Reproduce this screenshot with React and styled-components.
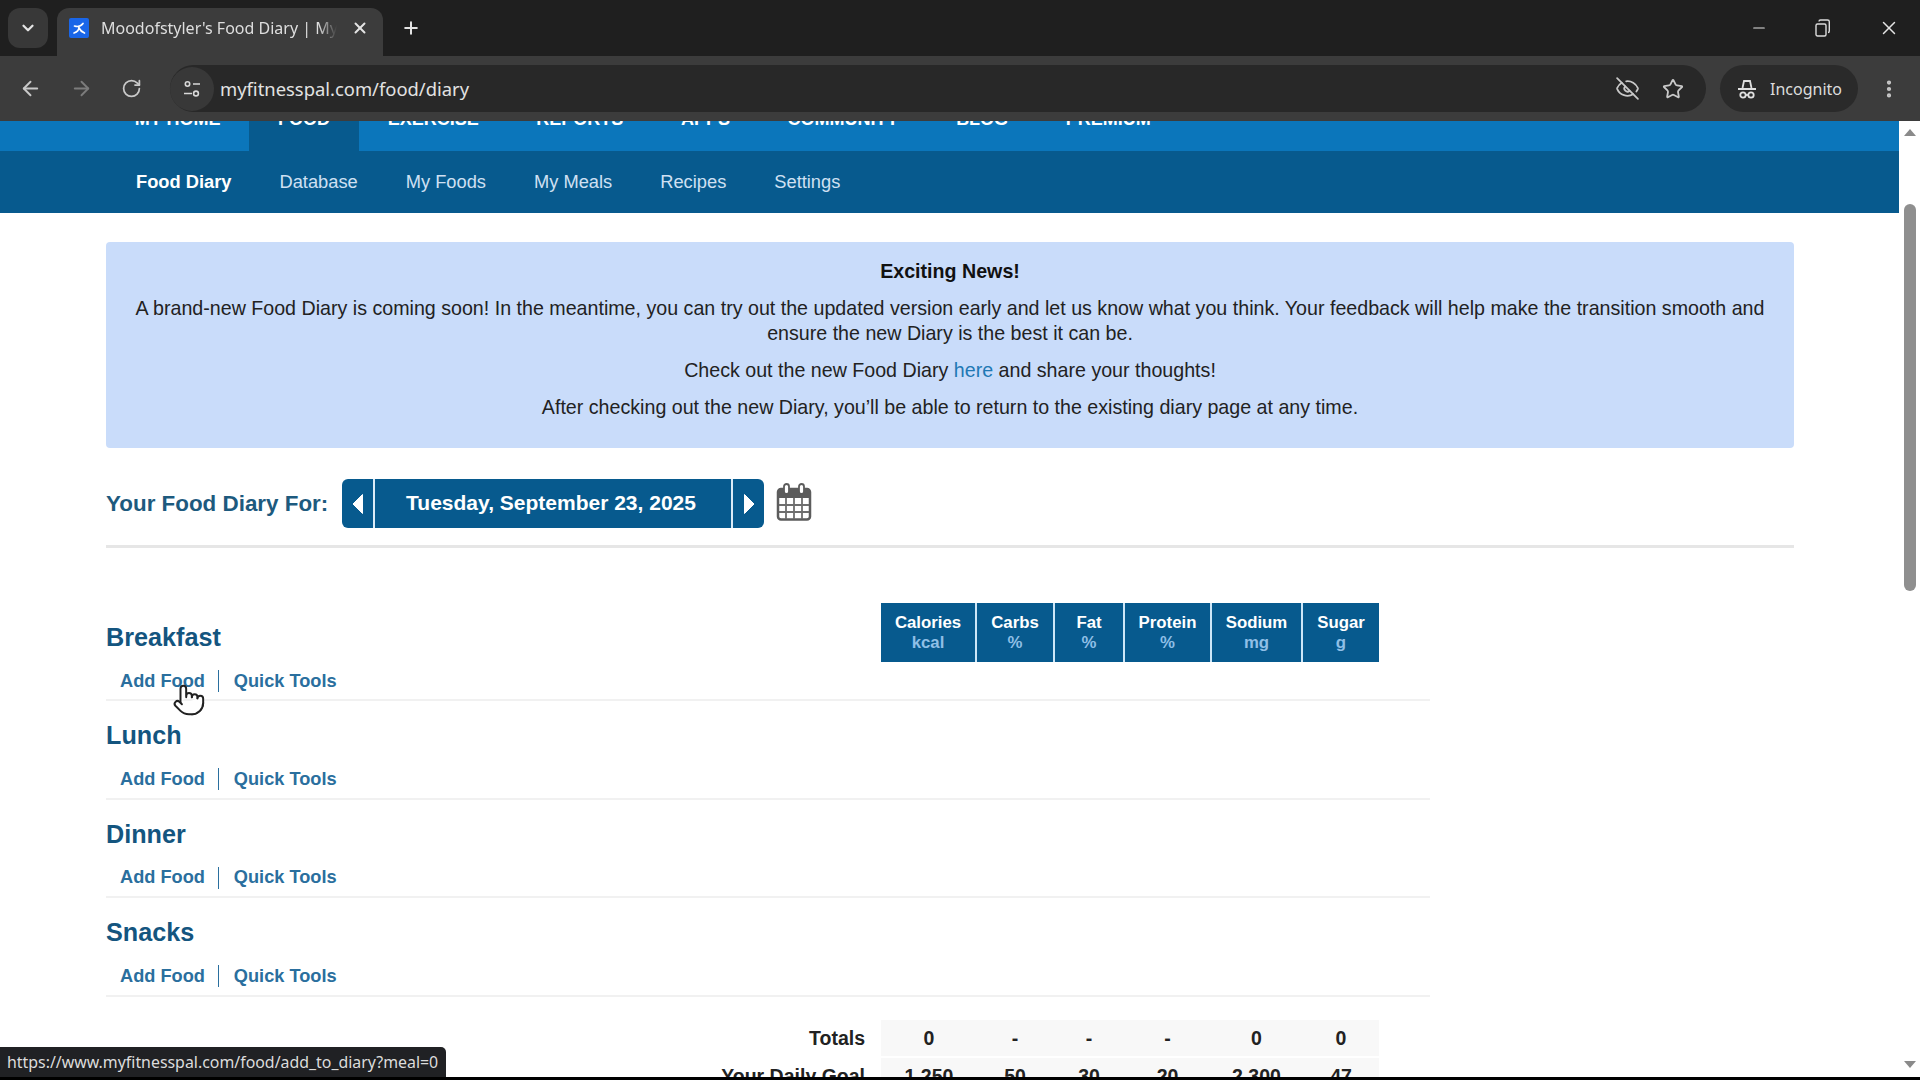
import React from 'react';
import styled, {createGlobalStyle} from 'styled-components';
import {ChevronDown, X, Plus, Minus, ArrowLeft, ArrowRight, RotateCw, EyeOff, Star, EllipsisVertical, Pointer} from 'lucide-react';

const GlobalStyle = createGlobalStyle`
    html, body {margin: 0; padding: 0; background: #000; overflow: hidden;}
    * {box-sizing: border-box;}
`;

const pageFont = '"Liberation Sans", Arial, sans-serif';
const chromeFont = '"Noto Sans", Roboto, sans-serif';
const columns = '775px 94px 78px 70px 87px 91px 78px 51px';

const Frame = styled.div`
    width: 1920px;
    height: 1077px;
    display: flex;
    flex-direction: column;
    overflow: hidden;
    background: #fff;
`;

// Browser window parts
const TabStrip = styled.div`
    height: 56px;
    flex: none;
    display: flex;
    align-items: flex-end;
    padding: 0 20px 0 8px;
    background: #1f1f1f;
    color: #e4e4e4;
    font-family: ${chromeFont};
`;

const TabSearch = styled.div`
    width: 40px;
    height: 40px;
    margin-bottom: 8px;
    border-radius: 12px;
    background: #383838;
    display: flex;
    align-items: center;
    justify-content: center;
`;

const Tab = styled.div`
    width: 326px;
    height: 48px;
    margin-left: 9px;
    padding: 0 14px 8px 12px;
    display: flex;
    align-items: center;
    border-radius: 12px 12px 0 0;
    background: #3c3c3c;
`;

const Favicon = styled.svg`
    flex: none;
    width: 20px;
    height: 20px;
`;

const TabTitle = styled.div`
    width: 236px;
    margin-left: 12px;
    white-space: nowrap;
    overflow: hidden;
    font-size: 16px;
    color: #dedede;
    -webkit-mask-image: linear-gradient(to right, #000 92%, transparent);
    mask-image: linear-gradient(to right, #000 92%, transparent);
`;

const NewTab = styled.div`
    margin: 0 0 15px 18px;
    height: 26px;
    display: flex;
    align-items: center;
`;

const WindowButtons = styled.div`
    margin-left: auto;
    height: 56px;
    display: flex;
    align-items: center;
    gap: 47px;
`;

const Toolbar = styled.div`
    height: 65px;
    flex: none;
    display: flex;
    align-items: center;
    padding: 0 19px 0 19px;
    background: #3c3c3c;
    color: #c9c9c9;
    font-family: ${chromeFont};
`;

const NavIcons = styled.div`
    width: 132px;
    margin-right: 19px;
    display: flex;
    align-items: center;
    gap: 28px;
`;

const Omnibox = styled.div`
    width: 1536px;
    height: 47px;
    display: flex;
    align-items: center;
    border-radius: 24px;
    background: #282828;
`;

const SiteControls = styled.div`
    width: 44px;
    height: 44px;
    border-radius: 50%;
    background: #383838;
    display: flex;
    align-items: center;
    justify-content: center;
`;

const Url = styled.div`
    margin-left: 6px;
    font-size: 18.4px;
    color: #e2e2e2;
`;

const OmniIcons = styled.div`
    margin-left: auto;
    padding-right: 22px;
    display: flex;
    align-items: center;
    gap: 22px;
`;

const IncognitoPill = styled.div`
    width: 138px;
    height: 47px;
    margin-left: 14px;
    padding-left: 15px;
    border-radius: 24px;
    background: #2a2a2a;
    display: flex;
    align-items: center;
    gap: 11px;
    font-size: 16px;
    color: #dcdcdc;
`;

const MenuButton = styled.div`
    margin-left: 20px;
    display: flex;
`;

// Page area under the browser bars
const Viewport = styled.div`
    flex: 1;
    min-height: 0;
    display: flex;
    position: relative;
`;

const Page = styled.div`
    flex: 1;
    min-width: 0;
    font-family: ${pageFont};
    overflow: hidden;
`;

const Scrollbar = styled.div`
    width: 21px;
    flex: none;
    display: flex;
    flex-direction: column;
    align-items: center;
    padding: 8px 0 9px;
    background: #fff;
`;

const ScrollArrow = styled.div`
    width: 0;
    height: 0;
    border-left: 6px solid transparent;
    border-right: 6px solid transparent;
    ${props => props.$down ? 'border-top: 7px solid #8a8a8a; margin-top: auto;' : 'border-bottom: 7px solid #8a8a8a;'}
`;

const ScrollThumb = styled.div`
    width: 12px;
    height: 387px;
    margin-top: 68px;
    border-radius: 6px;
    background: #8f8f8f;
`;

const MainNav = styled.div`
    height: 30px;
    display: flex;
    align-items: stretch;
    padding-left: 106px;
    overflow: hidden;
    background: #0b76bb;
`;

const MainNavItem = styled.div`
    display: flex;
    align-items: flex-end;
    padding: 0 28.8px 23px;
    font-size: 18px;
    font-weight: 700;
    line-height: 18px;
    color: #fff;
    background: ${props => props.$active ? '#075a8e' : 'transparent'};
`;

const SubNav = styled.div`
    height: 62px;
    display: flex;
    align-items: center;
    gap: 48px;
    padding-left: 136px;
    background: #075a8e;
`;

const SubNavItem = styled.div`
    font-size: 18.3px;
    font-weight: ${props => props.$active ? 700 : 400};
    color: ${props => props.$active ? '#fff' : '#cfe0f3'};
`;

const Content = styled.div`
    padding: 29px 105px 0 106px;
`;

const Notice = styled.div`
    height: 206px;
    padding: 17px 24px 0;
    display: flex;
    flex-direction: column;
    gap: 12px;
    border-radius: 4px;
    background: #c9dcfa;
    font-size: 19.65px;
    line-height: 25px;
    text-align: center;
    color: #222;
`;

const NoticeTitle = styled.div`
    font-weight: 700;
    color: #111;
`;

const NoticeLink = styled.span`
    color: #1f78b4;
`;

const DateRow = styled.div`
    margin-top: 31px;
    height: 49px;
    display: flex;
    align-items: center;
`;

const DateLabel = styled.div`
    width: 236px;
    font-size: 22.4px;
    font-weight: 700;
    color: #1d5a7e;
`;

const DatePicker = styled.div`
    width: 422px;
    height: 49px;
    display: flex;
    border-radius: 6px;
    overflow: hidden;
    background: #075a8e;
`;

const DateArrow = styled.div`
    width: 33px;
    flex: none;
    display: flex;
    align-items: center;
    justify-content: center;
    ${props => props.$right ? 'border-left: 2px solid #dcecf8;' : 'border-right: 2px solid #dcecf8;'}
`;

const DateText = styled.div`
    flex: 1;
    padding-right: 4px;
    text-align: center;
    line-height: 48px;
    font-size: 21px;
    font-weight: 700;
    color: #fff;
`;

const CalendarIcon = styled.svg`
    width: 36px;
    height: 38px;
    margin: 0 0 4px 12px;
`;

const Rule = styled.div`
    margin-top: 17px;
    height: 3px;
    background: #e6e6e6;
`;

const Meals = styled.div`
    margin-top: 55px;
    width: 1324px;
`;

const MealBlock = styled.div`
    height: 98.4px;
    display: grid;
    grid-template-columns: ${columns};
    align-items: start;
    border-bottom: 2px solid #f1f1f1;
`;

const MealInfo = styled.div`
    padding-top: 17px;
`;

const MealTitle = styled.div`
    height: 34px;
    line-height: 34px;
    font-size: 25.2px;
    font-weight: 700;
    color: #14557f;
`;

const MealLinks = styled.div`
    margin-top: 15px;
    height: 24px;
    padding-left: 14px;
    display: flex;
    align-items: center;
    font-size: 18.2px;
    font-weight: 700;
    color: #2a6f9e;
`;

const LinkDivider = styled.span`
    width: 1px;
    height: 22px;
    margin: 0 15px 0 13px;
    background: #2a6f9e;
`;

const HeadCell = styled.div`
    height: 59px;
    padding-top: 10px;
    background: #075a8e;
    text-align: center;
    font-size: 16.8px;
    font-weight: 700;
    line-height: 20px;
    color: #fff;
    border-left: ${props => props.$first ? 'none' : '2px solid #cde6f7'};
`;

const HeadUnit = styled.div`
    color: #8fbfe6;
`;

const SummaryRow = styled.div`
    height: 36px;
    margin-top: ${props => props.$first ? '23px' : '2px'};
    display: grid;
    grid-template-columns: ${columns};
    font-size: 19.5px;
    font-weight: 700;
    line-height: 36px;
    color: #222;
`;

const SummaryLabel = styled.div`
    text-align: right;
    padding-right: 16px;
`;

const SummaryCell = styled.div`
    padding-left: 2px;
    text-align: center;
    background: #f8f8f8;
`;

const StatusBubble = styled.div`
    position: absolute;
    left: 0;
    bottom: 0;
    width: 446px;
    height: 30px;
    padding-left: 7px;
    border-radius: 0 5px 0 0;
    background: #202124;
    font-family: ${chromeFont};
    font-size: 15.9px;
    line-height: 30px;
    white-space: nowrap;
    color: #dcdcdc;
`;

const HandCursor = styled.div`
    position: absolute;
    left: 172px;
    top: 562px;
    display: flex;
`;

const meals = ['Breakfast', 'Lunch', 'Dinner', 'Snacks'];
const headers = [['Calories', 'kcal'], ['Carbs', '%'], ['Fat', '%'], ['Protein', '%'], ['Sodium', 'mg'], ['Sugar', 'g']];
const summaries = [
    ['Totals', '0', '-', '-', '-', '0', '0'],
    ['Your Daily Goal', '1,250', '50', '30', '20', '2,300', '47'],
];

// The blue tab icon
function FaviconIcon() {
    return (
        <Favicon viewBox="0 0 20 20">
            <rect width="20" height="20" rx="2" fill="#1a66e8"/>
            <path d="M5.5 8c3 1 6.500 0 8.500-2.500M10 9c0 3-2 5-5 6M10 10c1 2 3 4 5.500 5" stroke="#fff" strokeWidth="1.7" fill="none" strokeLinecap="round"/>
        </Favicon>
    );
}

// Overlapping squares of the restore button
function RestoreIcon() {
    return (
        <svg width="16" height="20" viewBox="0 0 16 20" fill="none" stroke="#dcdcdc" strokeWidth="1.4">
            <rect x="1" y="6" width="10" height="12" rx="1.5"/>
            <path d="M4 3.500c0-1 .6-1.500 1.500-1.500h7c1 0 1.800.7 1.800 1.700v9.300c0 1-.5 1.500-1.300 1.500"/>
        </svg>
    );
}

// Site controls icon in front of the url
function TuneIcon() {
    return (
        <svg width="20" height="20" viewBox="0 0 20 20" fill="none" stroke="#d8d8d8" strokeWidth="1.6">
            <circle cx="5.500" cy="5" r="2.200"/>
            <path d="M11 5h7M2 14.500h8"/>
            <circle cx="14" cy="14.500" r="2.400"/>
        </svg>
    );
}

// Hat and glasses of the incognito chip
function IncognitoIcon() {
    return (
        <svg width="24" height="24" viewBox="-3 -2 24 24" fill="none" stroke="#e0e0e0" strokeWidth="1.800">
            <path d="M4.500 9l1.500-7h6l1.500 7"/>
            <path d="M0 10h18" strokeWidth="2"/>
            <circle cx="5" cy="16" r="2.700"/>
            <circle cx="13" cy="16" r="2.700"/>
            <path d="M7.500 16h3"/>
        </svg>
    );
}

function DateTriangle({right}) {
    return (
        <svg width="12" height="22" viewBox="0 0 12 22">
            <path d={right ? 'M1.500 1.500L11 11l-9.500 9.500z' : 'M10.500 1.500L1 11l9.500 9.500z'} fill="#fff" stroke="#fff" strokeLinejoin="round"/>
        </svg>
    );
}

function Calendar() {
    return (
        <CalendarIcon viewBox="0 0 36 38">
            <rect x="2" y="6" width="32" height="30.500" rx="3" fill="#fff" stroke="#5c5c5c" strokeWidth="2.500"/>
            <path d="M2 9c0-2 1-3 3-3h26c2 0 3 1 3 3v6H2z" fill="#5c5c5c"/>
            <rect x="8" y="1" width="5" height="10" rx="2.500" fill="#fff" stroke="#5c5c5c" strokeWidth="1.800"/>
            <rect x="23" y="1" width="5" height="10" rx="2.500" fill="#fff" stroke="#5c5c5c" strokeWidth="1.800"/>
            <path d="M3 22h30M3 29h30M10 15v21M18 15v21M26 15v21" stroke="#6e6e6e" strokeWidth="1.800"/>
        </CalendarIcon>
    );
}

function BrowserBars() {
    return (
        <>
            <TabStrip>
                <TabSearch><ChevronDown size={18} strokeWidth={3}/></TabSearch>
                <Tab>
                    <FaviconIcon/>
                    <TabTitle>Moodofstyler's Food Diary | MyFitnessPal</TabTitle>
                    <X size={18} strokeWidth={2.6} style={{marginLeft: 'auto'}}/>
                </Tab>
                <NewTab><Plus size={20} strokeWidth={2.4}/></NewTab>
                <WindowButtons>
                    <Minus size={18} strokeWidth={1.6}/>
                    <RestoreIcon/>
                    <X size={22} strokeWidth={1.6}/>
                </WindowButtons>
            </TabStrip>
            <Toolbar>
                <NavIcons>
                    <ArrowLeft size={23}/>
                    <ArrowRight size={23} color="#7c7c7c"/>
                    <RotateCw size={21}/>
                </NavIcons>
                <Omnibox>
                    <SiteControls><TuneIcon/></SiteControls>
                    <Url>myfitnesspal.com/food/diary</Url>
                    <OmniIcons>
                        <EyeOff size={25} strokeWidth={1.7}/>
                        <Star size={22} strokeWidth={2}/>
                    </OmniIcons>
                </Omnibox>
                <IncognitoPill><IncognitoIcon/>Incognito</IncognitoPill>
                <MenuButton><EllipsisVertical size={22} strokeWidth={2.6}/></MenuButton>
            </Toolbar>
        </>
    );
}

function Meal({name, showHeaders}) {
    return (
        <MealBlock>
            <MealInfo>
                <MealTitle>{name}</MealTitle>
                <MealLinks>Add Food<LinkDivider/>Quick Tools</MealLinks>
            </MealInfo>
            {showHeaders && headers.map(([label, unit], i) =>
                <HeadCell key={label} $first={i === 0}>
                    {label}
                    <HeadUnit>{unit}</HeadUnit>
                </HeadCell>
            )}
        </MealBlock>
    );
}

export default function App() {
    return (
        <Frame>
            <GlobalStyle/>
            <BrowserBars/>
            <Viewport>
                <Page>
                    <MainNav>
                        {['My Home', 'Food', 'Exercise', 'Reports', 'Apps', 'Community', 'Blog', 'Premium'].map(item =>
                            <MainNavItem key={item} $active={item === 'Food'}>{item.toUpperCase()}</MainNavItem>
                        )}
                    </MainNav>
                    <SubNav>
                        {['Food Diary', 'Database', 'My Foods', 'My Meals', 'Recipes', 'Settings'].map((item, i) =>
                            <SubNavItem key={item} $active={i === 0}>{item}</SubNavItem>
                        )}
                    </SubNav>
                    <Content>
                        <Notice>
                            <NoticeTitle>Exciting News!</NoticeTitle>
                            <div>A brand-new Food Diary is coming soon! In the meantime, you can try out the updated version early and let us know what you think. Your feedback will help make the transition smooth and ensure the new Diary is the best it can be.</div>
                            <div>Check out the new Food Diary <NoticeLink>here</NoticeLink> and share your thoughts!</div>
                            <div>After checking out the new Diary, you’ll be able to return to the existing diary page at any time.</div>
                        </Notice>
                        <DateRow>
                            <DateLabel>Your Food Diary For:</DateLabel>
                            <DatePicker>
                                <DateArrow><DateTriangle/></DateArrow>
                                <DateText>Tuesday, September 23, 2025</DateText>
                                <DateArrow $right><DateTriangle right/></DateArrow>
                            </DatePicker>
                            <Calendar/>
                        </DateRow>
                        <Rule/>
                        <Meals>
                            {meals.map((name, i) => <Meal key={name} name={name} showHeaders={i === 0}/>)}
                            {summaries.map((row, r) =>
                                <SummaryRow key={row[0]} $first={r === 0}>
                                    <SummaryLabel>{row[0]}</SummaryLabel>
                                    {row.slice(1).map((value, i) => <SummaryCell key={i}>{value}</SummaryCell>)}
                                </SummaryRow>
                            )}
                        </Meals>
                    </Content>
                </Page>
                <Scrollbar>
                    <ScrollArrow/>
                    <ScrollThumb/>
                    <ScrollArrow $down/>
                </Scrollbar>
                <HandCursor><Pointer size={34} fill="#fff" color="#222" strokeWidth={1.4}/></HandCursor>
                <StatusBubble>https://www.myfitnesspal.com/food/add_to_diary?meal=0</StatusBubble>
            </Viewport>
        </Frame>
    );
}
